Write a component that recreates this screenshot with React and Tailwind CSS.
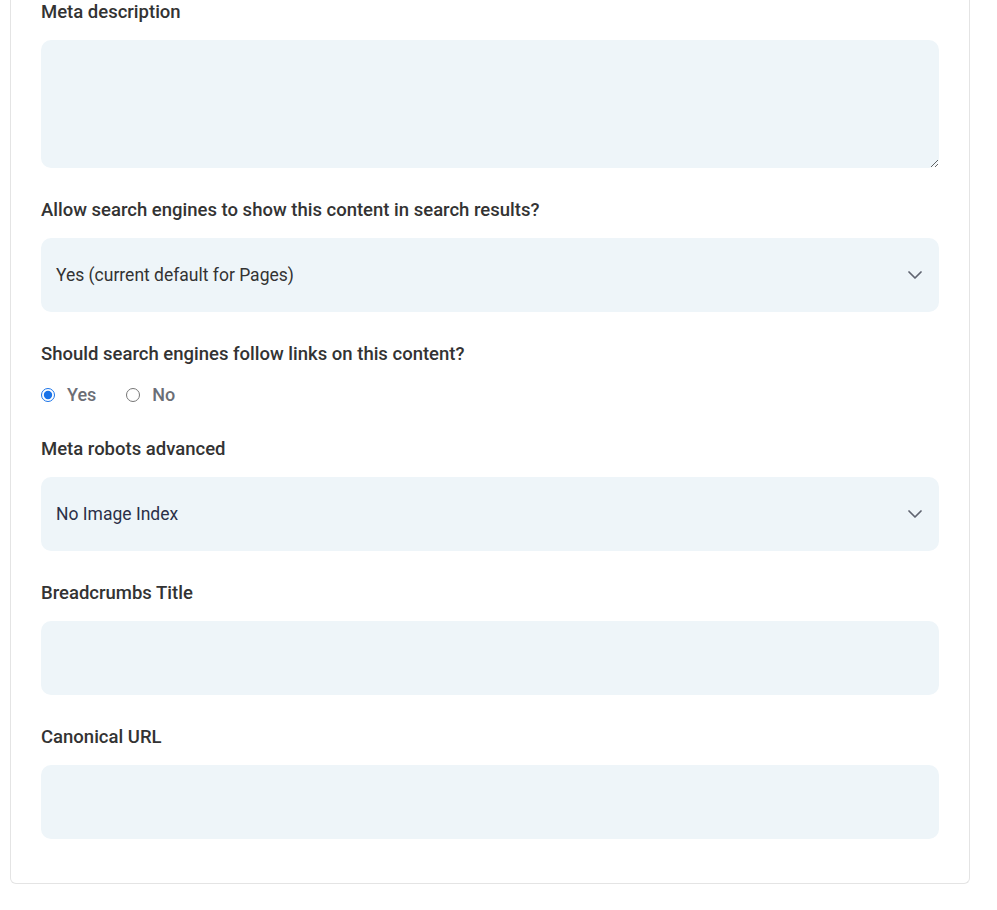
import { ChevronDown } from "lucide-react";

function Label({ children }) {
  return (
    <label className="block text-[18.5px] leading-6 font-medium text-[#333333] mb-4">
      {children}
    </label>
  );
}

function SelectBox({ value, tone = "text-[#333333]" }) {
  return (
    <div className="h-[74px] rounded-[10px] bg-[#eef5f9] flex items-center justify-between pl-[15px] pr-[12px]">
      <span className={`text-[17.5px] ${tone}`}>{value}</span>
      <ChevronDown className="w-6 h-6 text-[#5f6470]" strokeWidth={1.75} />
    </div>
  );
}

function TextInput() {
  return <input type="text" className="w-full h-[74px] rounded-[10px] bg-[#eef5f9] px-[15px] outline-none" />;
}

export default function App() {
  return (
    <div className="min-h-screen bg-white" style={{ fontFamily: "Roboto, 'Liberation Sans', sans-serif" }}>
      <div className="ml-[10px] w-[960px] border-x border-b border-[#e4e4e4] rounded-b-[6px] px-[30px] pb-[44px]">
        <div className="flex flex-col gap-[30px]">
          <div>
            <Label>Meta description</Label>
            <textarea className="block w-full h-[128px] rounded-[10px] bg-[#eef5f9] p-[15px] outline-none resize-y" />
          </div>

          <div>
            <Label>Allow search engines to show this content in search results?</Label>
            <SelectBox value="Yes (current default for Pages)" />
          </div>

          <div>
            <Label>Should search engines follow links on this content?</Label>
            <div className="flex items-center gap-[30px] h-[25px]">
              <label className="flex items-center gap-[12px]">
                <input type="radio" name="follow" defaultChecked className="w-[14px] h-[14px] m-0 accent-[#1a73e8]" />
                <span className="text-[18px] font-medium text-[#6b6e76]">Yes</span>
              </label>
              <label className="flex items-center gap-[12px]">
                <input type="radio" name="follow" className="w-[14px] h-[14px] m-0" />
                <span className="text-[18px] font-medium text-[#6b6e76]">No</span>
              </label>
            </div>
          </div>

          <div>
            <Label>Meta robots advanced</Label>
            <SelectBox value="No Image Index" tone="text-[#2b3048]" />
          </div>

          <div>
            <Label>Breadcrumbs Title</Label>
            <TextInput />
          </div>

          <div>
            <Label>Canonical URL</Label>
            <TextInput />
          </div>
        </div>
      </div>
    </div>
  );
}
